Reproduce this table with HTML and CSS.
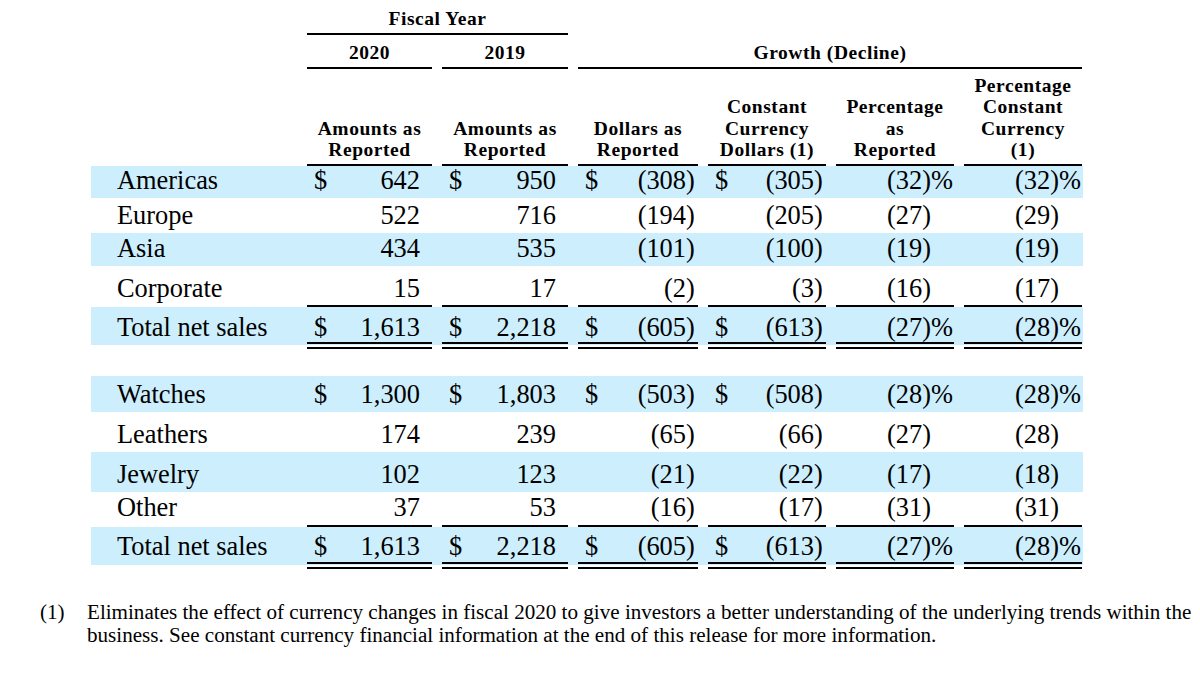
FILE: index.html
```html
<!DOCTYPE html>
<html lang="en">
<head>
<meta charset="utf-8">
<title>Net sales by segment</title>
<link rel="stylesheet" href="styles.css">
</head>
<body>
<div class="report">
  <div class="row hdr hdr-top">
    <div class="blank"></div>
    <div class="cell span-fy">Fiscal Year</div>
  </div>
  <div class="row hdr hdr-mid">
    <div class="blank"></div>
    <div class="cell">2020</div>
    <div class="cell">2019</div>
    <div class="cell span-gr">Growth (Decline)</div>
  </div>
  <div class="row hdr hdr-cols">
    <div class="blank"></div>
    <div class="cell">Amounts as<br>Reported</div>
    <div class="cell">Amounts as<br>Reported</div>
    <div class="cell">Dollars as<br>Reported</div>
    <div class="cell">Constant<br>Currency<br>Dollars (1)</div>
    <div class="cell">Percentage<br>as<br>Reported</div>
    <div class="cell">Percentage<br>Constant<br>Currency<br>(1)</div>
  </div>

  <div class="group">
    <div class="row body shade ht-32">
      <div class="cell label">Americas</div>
      <div class="cell num"><span>$</span><span>642</span></div>
      <div class="cell num"><span>$</span><span>950</span></div>
      <div class="cell num"><span>$</span><span>(308<span class="hang">)</span></span></div>
      <div class="cell num"><span>$</span><span>(305<span class="hang">)</span></span></div>
      <div class="cell num pct"><span>(32)<span class="hang">%</span></span></div>
      <div class="cell num pct"><span>(32)<span class="hang">%</span></span></div>
    </div>
    <div class="row body ht-35">
      <div class="cell label">Europe</div>
      <div class="cell num"><span></span><span>522</span></div>
      <div class="cell num"><span></span><span>716</span></div>
      <div class="cell num"><span></span><span>(194<span class="hang">)</span></span></div>
      <div class="cell num"><span></span><span>(205<span class="hang">)</span></span></div>
      <div class="cell num pct"><span>(27)</span></div>
      <div class="cell num pct"><span>(29)</span></div>
    </div>
    <div class="row body shade ht-33">
      <div class="cell label">Asia</div>
      <div class="cell num"><span></span><span>434</span></div>
      <div class="cell num"><span></span><span>535</span></div>
      <div class="cell num"><span></span><span>(101<span class="hang">)</span></span></div>
      <div class="cell num"><span></span><span>(100<span class="hang">)</span></span></div>
      <div class="cell num pct"><span>(19)</span></div>
      <div class="cell num pct"><span>(19)</span></div>
    </div>
    <div class="row body sub ht-41">
      <div class="cell label">Corporate</div>
      <div class="cell num"><span></span><span>15</span></div>
      <div class="cell num"><span></span><span>17</span></div>
      <div class="cell num"><span></span><span>(2<span class="hang">)</span></span></div>
      <div class="cell num"><span></span><span>(3<span class="hang">)</span></span></div>
      <div class="cell num pct"><span>(16)</span></div>
      <div class="cell num pct"><span>(17)</span></div>
    </div>
    <div class="row body shade tot ht-38">
      <div class="cell label">Total net sales</div>
      <div class="cell num"><span>$</span><span>1,613</span></div>
      <div class="cell num"><span>$</span><span>2,218</span></div>
      <div class="cell num"><span>$</span><span>(605<span class="hang">)</span></span></div>
      <div class="cell num"><span>$</span><span>(613<span class="hang">)</span></span></div>
      <div class="cell num pct"><span>(27)<span class="hang">%</span></span></div>
      <div class="cell num pct"><span>(28)<span class="hang">%</span></span></div>
    </div>
  </div>

  <div class="group">
    <div class="row body shade ht-36">
      <div class="cell label">Watches</div>
      <div class="cell num"><span>$</span><span>1,300</span></div>
      <div class="cell num"><span>$</span><span>1,803</span></div>
      <div class="cell num"><span>$</span><span>(503<span class="hang">)</span></span></div>
      <div class="cell num"><span>$</span><span>(508<span class="hang">)</span></span></div>
      <div class="cell num pct"><span>(28)<span class="hang">%</span></span></div>
      <div class="cell num pct"><span>(28)<span class="hang">%</span></span></div>
    </div>
    <div class="row body ht-40">
      <div class="cell label">Leathers</div>
      <div class="cell num"><span></span><span>174</span></div>
      <div class="cell num"><span></span><span>239</span></div>
      <div class="cell num"><span></span><span>(65<span class="hang">)</span></span></div>
      <div class="cell num"><span></span><span>(66<span class="hang">)</span></span></div>
      <div class="cell num pct"><span>(27)</span></div>
      <div class="cell num pct"><span>(28)</span></div>
    </div>
    <div class="row body shade ht-40">
      <div class="cell label">Jewelry</div>
      <div class="cell num"><span></span><span>102</span></div>
      <div class="cell num"><span></span><span>123</span></div>
      <div class="cell num"><span></span><span>(21<span class="hang">)</span></span></div>
      <div class="cell num"><span></span><span>(22<span class="hang">)</span></span></div>
      <div class="cell num pct"><span>(17)</span></div>
      <div class="cell num pct"><span>(18)</span></div>
    </div>
    <div class="row body sub ht-35 tight">
      <div class="cell label">Other</div>
      <div class="cell num"><span></span><span>37</span></div>
      <div class="cell num"><span></span><span>53</span></div>
      <div class="cell num"><span></span><span>(16<span class="hang">)</span></span></div>
      <div class="cell num"><span></span><span>(17<span class="hang">)</span></span></div>
      <div class="cell num pct"><span>(31)</span></div>
      <div class="cell num pct"><span>(31)</span></div>
    </div>
    <div class="row body shade tot ht-38 low">
      <div class="cell label">Total net sales</div>
      <div class="cell num"><span>$</span><span>1,613</span></div>
      <div class="cell num"><span>$</span><span>2,218</span></div>
      <div class="cell num"><span>$</span><span>(605<span class="hang">)</span></span></div>
      <div class="cell num"><span>$</span><span>(613<span class="hang">)</span></span></div>
      <div class="cell num pct"><span>(27)<span class="hang">%</span></span></div>
      <div class="cell num pct"><span>(28)<span class="hang">%</span></span></div>
    </div>
  </div>
</div>

<div class="note">
  <div class="note-num">(1)</div>
  <p class="note-text"><span class="line">Eliminates the effect of currency changes in fiscal 2020 to give investors a better understanding of the underlying trends within the</span><br><span class="line">business. See constant currency financial information at the end of this release for more information.</span></p>
</div>
</body>
</html>
```

FILE: styles.css
```css
* {
  box-sizing: border-box;
}

html, body {
  margin: 0;
  background: #ffffff;
}

body {
  color: #000000;
  font-family: "Liberation Serif", "Times New Roman", serif;
}

.report {
  margin-left: 91px;
  width: 992px;
}

.row {
  display: grid;
  grid-template-columns: 206px 125px 126px 120px 118px 118px 118px;
  column-gap: 10px;
  align-items: end;
}

/* ---------- header ---------- */
.hdr {
  font-weight: bold;
  font-size: 19.5px;
  line-height: 21.6px;
  letter-spacing: 0.55px;
  text-align: center;
}

.hdr .cell {
  padding-bottom: 3px;
  border-bottom: 2px solid #000000;
  white-space: nowrap;
}

.hdr-top { height: 35px; }
.hdr-mid { height: 34px; }
.hdr-cols { height: 97px; }

.span-fy { grid-column: 2 / span 2; }
.span-gr { grid-column: 4 / span 4; }

/* ---------- body ---------- */
.body {
  font-size: 26.4px;
  line-height: 28px;
}

.shade {
  background: #cdeefd;
}

.body .cell {
  padding-bottom: 4px;
  white-space: nowrap;
}

.label {
  padding-left: 26px;
}

.num {
  display: flex;
  justify-content: space-between;
  padding-left: 7px;
  padding-right: 12px;
}

.pct {
  justify-content: flex-end;
  padding-right: 23px;
}

.hang {
  display: inline-block;
  width: 0;
}

.sub .cell {
  border-bottom: 2px solid #000000;
  padding-bottom: 3px;
}

.sub.tight .cell {
  padding-bottom: 4px;
}

.sub .label {
  border-bottom-color: transparent;
}

.tot .cell {
  border-bottom: 7px double #000000;
  margin-bottom: -4px;
  padding-bottom: 1px;
}

.tot.low .cell {
  padding-bottom: 2px;
}

.tot .label {
  border-bottom-color: transparent;
}

.group + .group {
  margin-top: 31px;
}

.ht-32 { height: 32px; }
.ht-33 { height: 33px; }
.ht-35 { height: 35px; }
.ht-36 { height: 36px; }
.ht-38 { height: 38px; }
.ht-40 { height: 40px; }
.ht-41 { height: 41px; }

/* ---------- footnote ---------- */
.note {
  display: flex;
  margin: 36px 0 0 40px;
  font-size: 21.1px;
  line-height: 23px;
}

.note-num {
  flex: none;
  width: 47px;
}

.note-text {
  margin: 0;
}

.line {
  white-space: nowrap;
}
```
